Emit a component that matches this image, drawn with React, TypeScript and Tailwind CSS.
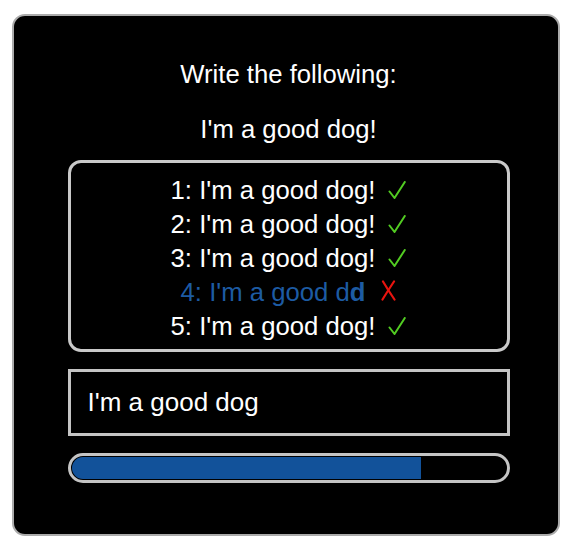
import React from "react";

type Line = { n: number; text: string; ok: boolean };

const lines: Line[] = [
  { n: 1, text: "I'm a good dog!", ok: true },
  { n: 2, text: "I'm a good dog!", ok: true },
  { n: 3, text: "I'm a good dog!", ok: true },
  { n: 4, text: "I'm a good d", ok: false },
  { n: 5, text: "I'm a good dog!", ok: true },
];

const Check = () => (
  <svg width="18" height="18" viewBox="0 0 18 18" className="ml-[13px] inline-block align-baseline">
    <path d="M1.5 10.5 L6.5 17 L16.8 1" fill="none" stroke="#52cc22" strokeWidth="2" strokeLinecap="round" strokeLinejoin="round" />
  </svg>
);

const Cross = () => (
  <svg width="15" height="21" viewBox="0 0 15 21" className="ml-[16px] inline-block align-[-3px]">
    <path d="M2 1.5 Q7 10 13.5 19.5" fill="none" stroke="#e8140f" strokeWidth="2.2" strokeLinecap="round" />
    <path d="M13 1.5 Q7 10.5 1.5 19.5" fill="none" stroke="#e8140f" strokeWidth="2.2" strokeLinecap="round" />
  </svg>
);

export default function App() {
  return (
    <div className="w-[584px] h-[549px] bg-white pt-[14px] pl-[12px] font-['Liberation_Sans',Arial,sans-serif]">
      <div className="w-[548px] h-[522px] bg-black border-2 border-[#ababab] rounded-[13px] flex flex-col items-center pt-[44px] pl-[5px] text-white text-[25.7px] leading-[28.75px]">
        <p>Write the following:</p>
        <p className="mt-[26px]">I'm a good dog!</p>

        {/* typed lines */}
        <div className="mt-[16px] w-[442px] border-[3px] border-[#c9c9c9] rounded-[13px] pt-[10px] pb-[6px] flex flex-col items-center">
          {lines.map((l) => (
            <div key={l.n} className="leading-[34px] h-[34px] flex items-baseline">
              {l.ok ? (
                <>
                  <span>
                    {l.n}: {l.text}
                  </span>
                  <Check />
                </>
              ) : (
                <>
                  <span className="text-[#1d5ba3]">
                    {l.n}: {l.text}
                    <b>d</b>
                  </span>
                  <Cross />
                </>
              )}
            </div>
          ))}
        </div>

        {/* input */}
        <div className="mt-[17px] w-[442px] h-[67px] border-[3px] border-[#c4c4c4] flex items-center pl-[17px] text-[26px]">
          I'm a good dog
        </div>

        {/* progress */}
        <div className="mt-[17px] w-[442px] h-[30px] border-[3px] border-[#c4c4c4] rounded-full p-[1px] overflow-hidden">
          <div className="h-full w-[349px] bg-[#12529a] rounded-l-full"></div>
        </div>
      </div>
    </div>
  );
}
